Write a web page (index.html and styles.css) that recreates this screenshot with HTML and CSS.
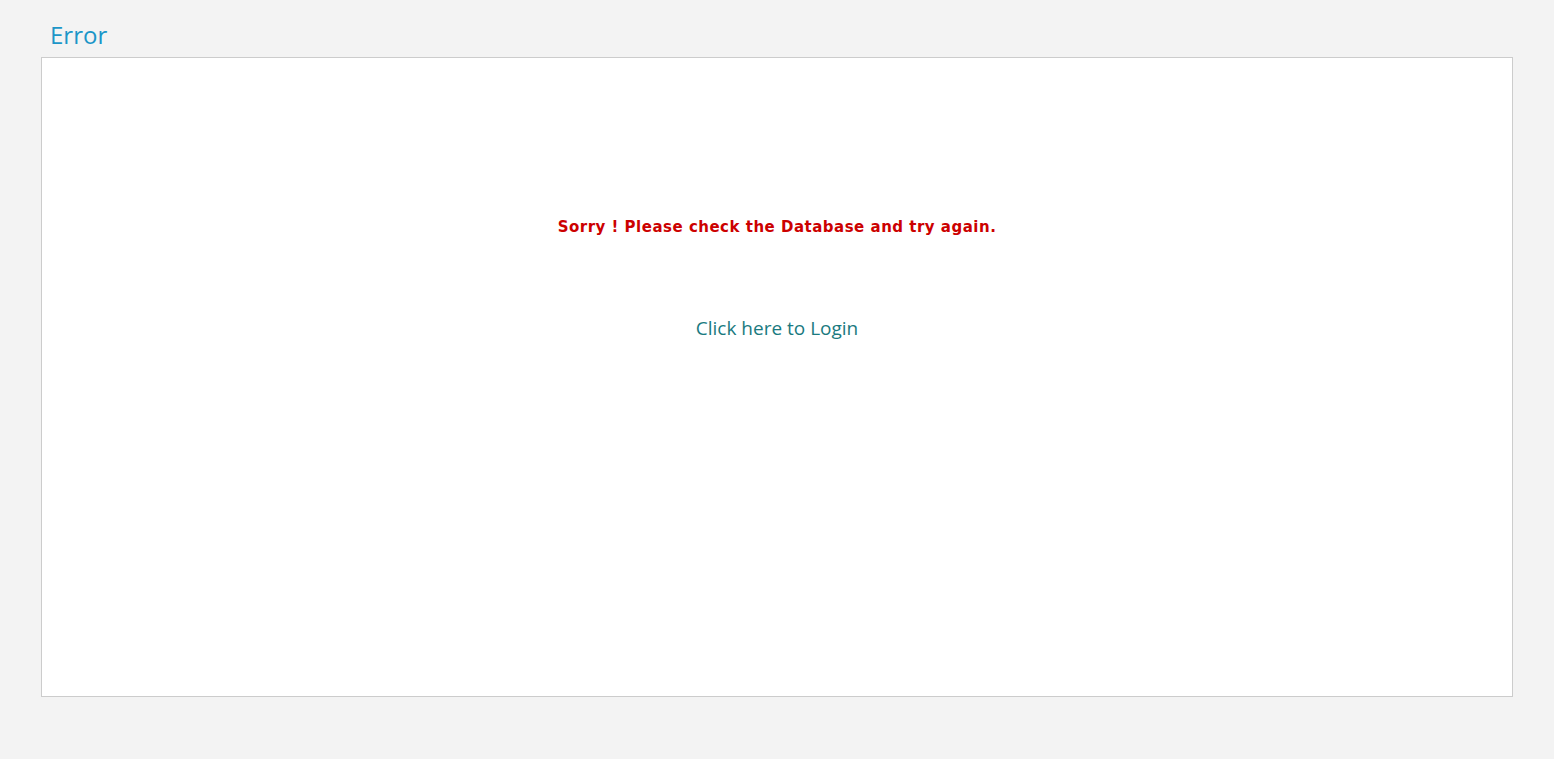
FILE: index.html
```html
<!DOCTYPE html>
<html>
<head>
<meta charset="utf-8">
<link rel="stylesheet" href="styles.css">
</head>
<body>
<div class="page">
  <h1 class="title">Error</h1>
  <div class="panel">
    <p class="msg">Sorry ! Please check the Database and try again.</p>
    <a class="login" href="#">Click here to Login</a>
  </div>
</div>
</body>
</html>
```
FILE: styles.css
```css
html, body {
  margin: 0;
  padding: 0;
  background: #f3f3f3;
}
.page {
  padding: 0 41px;
}
.title {
  margin: 0;
  padding: 20px 0 0 9px;
  height: 57px;
  box-sizing: border-box;
  font-family: "Open Sans", "DejaVu Sans", sans-serif;
  font-weight: 400;
  font-size: 24px;
  line-height: 30px;
  color: #1c96c8;
}
.panel {
  height: 640px;
  box-sizing: border-box;
  background: #fff;
  border: 1px solid #cccccc;
  display: flex;
  flex-direction: column;
  align-items: center;
  padding-top: 158px;
}
.msg {
  margin: 0;
  font-family: "DejaVu Sans", Verdana, sans-serif;
  font-weight: bold;
  font-size: 15px;
  letter-spacing: 0.5px;
  line-height: 22px;
  color: #cc0000;
}
.login {
  margin-top: 78px;
  font-family: "Open Sans", "DejaVu Sans", sans-serif;
  font-size: 19px;
  line-height: 24px;
  color: #1a7a80;
  text-decoration: none;
}
```
